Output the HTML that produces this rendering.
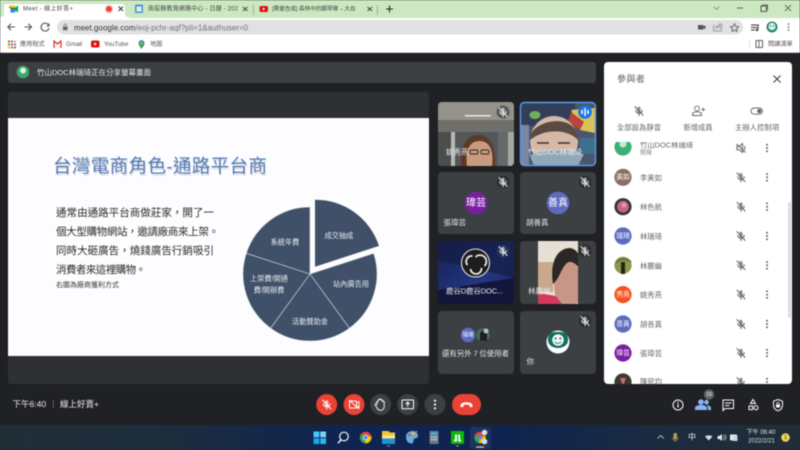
<!DOCTYPE html>
<html lang="zh-Hant"><head><meta charset="utf-8"><title>Meet - 線上好賣+</title>
<style>
html,body{margin:0;padding:0;width:800px;height:450px;overflow:hidden;background:#202124}
svg{display:block;filter:blur(.45px)}
text{font-family:"Liberation Sans","Noto Sans CJK TC",sans-serif;dominant-baseline:central}
.m{text-anchor:middle}
.tb{font-size:6px;fill:#444}
.bm{font-size:6.2px;fill:#555}
.tile{font-size:7.5px;fill:#e8eaed}
.av{font-size:10px;fill:#fff;text-anchor:middle}
.pn{font-size:7.3px;fill:#5f6368}
.pa{font-size:6.8px;fill:#fff;text-anchor:middle}
.pl{font-size:7.3px;fill:#5f6368;text-anchor:middle}
.b{font-size:10.5px;fill:#2a2a2a}
.pie{font-size:7.2px;fill:#e8ecf2;text-anchor:middle}
</style></head><body>
<svg width="800" height="450" viewBox="0 0 800 450" xmlns="http://www.w3.org/2000/svg">
<defs>
<g id="mic" fill="none" stroke-linecap="round">
<rect x="-1.6" y="-4.3" width="3.2" height="6" rx="1.6" stroke="none" fill="currentColor" opacity=".7"/>
<path d="M-3.2 -.6C-3.2 3.2 3.2 3.2 3.2 -.6M0 2.3V4.6M-4 -4.4L4 4.4" stroke="currentColor" stroke-width="1.05"/>
</g>
<g id="dots" fill="#5f6368"><circle cy="-3.3" r="1"/><circle r="1"/><circle cy="3.3" r="1"/></g>
<linearGradient id="tg" x1="0" x2="1" y1="0" y2="0"><stop offset="0" stop-color="#202e36"/><stop offset=".2" stop-color="#1d2d3c"/><stop offset=".42" stop-color="#0f2450"/><stop offset=".62" stop-color="#0f2450"/><stop offset=".85" stop-color="#1c2c3e"/><stop offset="1" stop-color="#202e38"/></linearGradient>
<linearGradient id="obs" x1="0" x2="1" y1="0" y2="1"><stop offset="0" stop-color="#14204f"/><stop offset=".6" stop-color="#233680"/><stop offset="1" stop-color="#1a2660"/></linearGradient>
<clipPath id="c1"><rect x="438" y="102" width="76" height="64" rx="4"/></clipPath>
<clipPath id="c2"><rect x="520" y="102" width="76" height="64" rx="4"/></clipPath>
<clipPath id="c5"><rect x="438" y="241" width="76" height="63" rx="4"/></clipPath>
<clipPath id="c6"><rect x="538" y="241" width="40" height="63"/></clipPath>
<clipPath id="list"><rect x="604" y="142" width="188" height="242"/></clipPath>
<clipPath id="t3"><rect x="270" y="2" width="88" height="15"/></clipPath>
</defs>

<!-- browser chrome -->
<rect width="800" height="18" fill="#cbe8c0"/>
<path d="M0 18V17C3 17 4 16 4 13V7C4 5 5 4 7 4H122C124 4 125 5 125 7V13C125 16 126 17 129 17V18Z" fill="#fff"/>
<g transform="translate(14,9)"><path d="M-3.5-3.5H1V0H-3.5Z" fill="#00832d"/><path d="M-3.5-3.5H1V-1H-3.5Z" fill="#fbbc04"/><path d="M-3.5 0H1V3.5H-3.5Z" fill="#2684fc"/><path d="M1-1.5L4-3.5V3.5L1 1.5Z" fill="#00ac47"/><path d="M-3.5-3.5V-1H-5.5Z" fill="#ea4335"/></g>
<text x="23" y="9.5" class="tb" textLength="50">Meet - 線上好賣+</text>
<circle cx="109" cy="9" r="3" fill="#ea4335"/><circle cx="109" cy="9" r="4.4" fill="#ea4335" opacity=".25"/>
<path d="M118.5 6.5L123 11M123 6.5L118.5 11" stroke="#333" stroke-width="1"/>
<rect x="135" y="4.5" width="8" height="8.5" rx="1" fill="#4a8fe8"/><rect x="136.5" y="6.5" width="5" height="5" fill="#e8f0d0"/>
<text x="148" y="9.5" class="tb" textLength="90">南投縣教育網路中心 - 日曆 - 202</text>
<path d="M243 7L247.5 11M247.5 7L243 11" stroke="#444" stroke-width="1"/>
<rect x="253" y="5" width=".8" height="10" fill="#8aa68a"/>
<rect x="259.5" y="6" width="8.5" height="6" rx="1.5" fill="#e01010"/><path d="M262.8 7.5L265.2 9L262.8 10.500Z" fill="#fff"/>
<text x="272" y="9.5" font-size="5.600" fill="#444" clip-path="url(#t3)">[票靈告成] 森林中的鋼琴聲 – 大自</text>
<path d="M367.500 7L372 11M372 7L367.500 11" stroke="#444" stroke-width="1"/>
<rect x="377" y="5" width=".8" height="10" fill="#8aa68a"/>
<path d="M389.500 5.500V12.500M386 9H393" stroke="#222" stroke-width="1.100"/>
<path d="M713.500 6.500L716.500 9.500L719.500 6.500" stroke="#888" fill="none" stroke-width=".8"/>
<path d="M737 8H743" stroke="#555" stroke-width=".9"/>
<rect x="761" y="6" width="5.500" height="5.500" fill="none" stroke="#444" stroke-width=".9"/><path d="M762.500 6V4.800H767.500V9.800H766.500" fill="none" stroke="#444" stroke-width=".7"/>
<path d="M785 5L791 11M791 5L785 11" stroke="#666" stroke-width=".9"/>

<rect y="18" width="800" height="17" fill="#fff"/>
<path d="M15 27H8M11 23.800L7.800 27L11 30.200" stroke="#555" stroke-width="1.100" fill="none"/>
<path d="M24.500 27H31.500M28.200 23.800L31.500 27L28.200 30.200" stroke="#555" stroke-width="1.100" fill="none"/>
<path d="M48.500 25A4 4 0 1 0 49 28M49 23.500V26H46.500" stroke="#555" stroke-width="1.100" fill="none"/>
<rect x="57" y="20" width="686" height="14.500" rx="7.200" fill="#e0e1e2"/>
<rect x="63" y="26.500" width="4.500" height="3.800" rx=".6" fill="#666"/><path d="M64 26.500V25.300A1.250 1.250 0 0 1 66.500 25.300V26.500" stroke="#666" stroke-width=".6" fill="none"/>
<text x="74" y="27.300" font-size="7.800" textLength="174" lengthAdjust="spacing"><tspan fill="#333">meet.google.com</tspan><tspan fill="#6d7073">/eoj-pchr-aqf?pli=1&amp;authuser=0</tspan></text>
<rect x="698" y="25" width="5.500" height="4.500" rx=".6" fill="#555"/><path d="M703.500 26.500L705.500 25.300V29.200L703.500 28Z" fill="#555"/>
<path d="M714.500 25.500H713.500V31H721.500V28M716 28.500C716 26 718 25 720 25V23.500L722.500 26L720 28V26.500C718.500 26.500 717 27 716 28.500Z" fill="none" stroke="#888" stroke-width=".7"/>
<path d="M734.500 23.800L735.800 26.400L738.600 26.800L736.500 28.700L737 31.400L734.500 30.100L732 31.400L732.500 28.700L730.400 26.800L733.200 26.400Z" fill="none" stroke="#555" stroke-width=".8"/>
<path d="M751 25H759M751 27.500H758M751 30H755" stroke="#333" stroke-width=".9"/><circle cx="757" cy="30" r="1.200" fill="#333"/><path d="M758.200 30V25.500" stroke="#333" stroke-width=".7"/>
<circle cx="772" cy="27" r="5.500" fill="#1f8a70"/><circle cx="772" cy="26.500" r="3.600" fill="#e8f3ef"/><circle cx="770.600" cy="26" r=".7" fill="#1f5a50"/><circle cx="773.400" cy="26" r=".7" fill="#1f5a50"/>
<g fill="#444"><circle cx="788.500" cy="24" r=".8"/><circle cx="788.500" cy="27" r=".8"/><circle cx="788.500" cy="30" r=".8"/></g>

<rect y="35" width="800" height="18" fill="#fff"/>
<g fill="#ea4335"><rect x="8" y="40.500" width="2" height="2"/><rect x="14" y="40.500" width="2" height="2" fill="#fbbc04"/><rect x="11" y="40.500" width="2" height="2" fill="#4285f4"/><rect x="8" y="43.500" width="2" height="2" fill="#34a853"/><rect x="11" y="43.500" width="2" height="2"/><rect x="14" y="43.500" width="2" height="2" fill="#4285f4"/><rect x="8" y="46.500" width="2" height="2" fill="#fbbc04"/><rect x="11" y="46.500" width="2" height="2" fill="#34a853"/><rect x="14" y="46.500" width="2" height="2"/></g>
<text x="20" y="44.500" class="bm">應用程式</text>
<path d="M54 40.500H61V48H54Z" fill="#f4f4f4"/><path d="M54 48V41L57.500 44L61 41V48" fill="none" stroke="#d9342b" stroke-width="1.200"/>
<text x="66" y="44.500" class="bm">Gmail</text>
<rect x="91" y="40.500" width="8.500" height="7" rx="1.800" fill="#e01010"/><path d="M94.200 42.300L96.800 44L94.200 45.700Z" fill="#fff"/>
<text x="104" y="44.500" class="bm">YouTube</text>
<path d="M141.500 49C139.500 46 138.500 44.800 138.500 43.200A3 3 0 0 1 144.500 43.200C144.500 44.800 143.500 46 141.500 49Z" fill="#34a853"/><path d="M139 41.500A3 3 0 0 1 144 41.500L141.500 44Z" fill="#4285f4"/><circle cx="141.500" cy="43.200" r="1" fill="#fbbc04"/>
<text x="150" y="44.500" class="bm">地圖</text>
<rect x="749" y="40" width=".7" height="8" fill="#ccc"/>
<rect x="756" y="40.500" width="6.500" height="7" fill="none" stroke="#555" stroke-width=".9"/><path d="M759 41V47" stroke="#555" stroke-width=".8"/>
<text x="768" y="44.500" class="bm">閱讀清單</text>
<rect y="52.500" width="800" height=".8" fill="#9aa0a6"/>

<!-- meet area -->
<rect y="53" width="800" height="372" fill="#202124"/>
<rect x="8" y="62" width="588" height="21" rx="3" fill="#3c4043"/>
<circle cx="23" cy="72" r="6.300" fill="#3ba56c"/><circle cx="23" cy="70.500" r="3" fill="#dff1e6"/>
<text x="37" y="72.500" font-size="7.500" fill="#e8eaed" textLength="114">竹山DOC林瑞琦正在分享螢幕畫面</text>

<rect x="8" y="92" width="421" height="292" rx="3" fill="#2f3033"/>
<rect x="8" y="118" width="421" height="238" fill="#fdfcff"/>
<text x="53" y="166.500" font-size="18.600" fill="#cfd3da" textLength="214" transform="translate(.8,1.600)" opacity=".7">台灣電商角色-通路平台商</text>
<text x="53" y="166" font-size="18.600" fill="#5277b0" textLength="214">台灣電商角色-通路平台商</text>
<text x="56" y="213" class="b" textLength="158">通常由通路平台商做莊家，開了一</text>
<text x="56" y="232" class="b" textLength="163">個大型購物網站，邀請廠商來上架。</text>
<text x="56" y="251" class="b" textLength="158">同時大砸廣告，燒錢廣告行銷吸引</text>
<text x="56" y="270" class="b" textLength="90">消費者來這裡購物。</text>
<text x="56" y="285.700" font-size="7" fill="#333" textLength="63">右圖為廠商獲利方式</text>

<g fill="#3f5068" stroke="#dfe3ea" stroke-width=".6">
<path d="M310 274L373.700 253.300A67 67 0 0 1 349.400 328.200Z"/>
<path d="M310 274L349.400 328.200A67 67 0 0 1 270.600 328.200Z"/>
<path d="M310 274L270.600 328.200A67 67 0 0 1 246.300 253.300Z"/>
<path d="M310 274L246.300 253.300A67 67 0 0 1 310 207Z"/>
</g>
<path d="M315 266.700L379 245.900A67 67 0 0 0 315 199.700Z" fill="#3f5068"/>
<text x="339" y="235.700" class="pie">成交抽成</text>
<text x="285" y="242" class="pie">系統年費</text>
<text x="351" y="284" class="pie">站內廣告用</text>
<text x="310" y="321.700" class="pie">活動贊助金</text>
<text x="269" y="278.700" class="pie">上架費/開通</text>
<text x="269" y="290" class="pie">費/開辦費</text>

<!-- tile 1 -->
<g clip-path="url(#c1)">
<rect x="438" y="102" width="76" height="64" fill="#6b6a66"/>
<rect x="438" y="102" width="76" height="18" fill="#94928a"/>
<rect x="465" y="115" width="26" height="1.500" fill="#ece9df"/>
<rect x="438" y="120" width="76" height="12" fill="#6f706c"/>
<rect x="438" y="132" width="13" height="34" fill="#4c4e4e"/>
<rect x="451" y="132" width="4" height="34" fill="#b9b9b3"/>
<rect x="455" y="132" width="43" height="34" fill="#54575a"/>
<rect x="498" y="132" width="10" height="34" fill="#66696a"/>
<rect x="508" y="132" width="6" height="34" fill="#a8a8a2"/>
<path d="M461 166C460 148 465 135 478 135C491 135 496 148 495 166Z" fill="#5d3a26"/>
<path d="M467 166C465 151 469 141 479.500 141C490 141 494 151 492 166Z" fill="#c99a7e"/>
<rect x="470" y="150" width="8" height="4" rx="1.500" fill="none" stroke="#2b2724" stroke-width=".9"/><rect x="481" y="150" width="8" height="4" rx="1.500" fill="none" stroke="#2b2724" stroke-width=".9"/>
</g>
<text x="446" y="152" class="tile">姚秀燕</text>
<circle cx="503" cy="112" r="6.500" fill="#3c4043" opacity=".7"/><use href="#mic" x="503" y="112" color="#e8eaed"/>

<!-- tile 2 -->
<g clip-path="url(#c2)">
<rect x="520" y="102" width="76" height="64" fill="#4a5670"/>
<rect x="520" y="102" width="55" height="24" fill="#333f58"/>
<path d="M571 110L595 108V133L580 130Z" fill="#d9c25c"/>
<path d="M571 112L584 122L580 130L568 122Z" fill="#b8443a"/>
<ellipse cx="535" cy="115" rx="5.500" ry="4" fill="#6fae5e"/>
<rect x="520" y="125" width="9" height="41" fill="#7a86a8"/>
<ellipse cx="554" cy="141" rx="24" ry="25" fill="#d6b8a6"/>
<path d="M530 140C528 120 578 110 578 140C568 129 545 128 530 140Z" fill="#5a4a42"/>
<path d="M537 143H549M558 143H570" stroke="#3a3330" stroke-width="1.400"/>
<path d="M530 156C540 149 570 148 584 154L578 166H534Z" fill="#8fa9b8"/>
<rect x="580" y="138" width="16" height="16" fill="#3e6f8f"/>
</g>
<rect x="520.500" y="102.500" width="75" height="63" rx="4" fill="none" stroke="#5b9be8" stroke-width="1.400"/>
<text x="528" y="152" class="tile" textLength="54">竹山DOC林瑞琦</text>
<circle cx="585" cy="112" r="6.800" fill="#1a73e8"/><path d="M582 110.500V113.500M585 108.500V115.500M588 110.500V113.500" stroke="#fff" stroke-width="1.500" stroke-linecap="round"/>

<!-- tile 3,4 -->
<rect x="438" y="172" width="76" height="62" rx="4" fill="#3c4043"/>
<circle cx="503" cy="182" r="6.500" fill="#2e3033"/><use href="#mic" x="503" y="182" color="#e8eaed"/>
<circle cx="476" cy="203" r="11.300" fill="#7b1fa2"/><text x="476" y="203.500" class="av">瑋芸</text>
<text x="443.500" y="222.500" class="tile">張瑋芸</text>
<rect x="520" y="172" width="76" height="62" rx="4" fill="#3c4043"/>
<circle cx="585" cy="182" r="6.500" fill="#2e3033"/><use href="#mic" x="585" y="182" color="#e8eaed"/>
<circle cx="558" cy="203" r="11.300" fill="#5c6bc0"/><text x="558" y="203.500" class="av">善真</text>
<text x="526" y="222.500" class="tile">胡善真</text>

<!-- tile 5 -->
<g clip-path="url(#c5)">
<rect x="438" y="241" width="76" height="63" fill="url(#obs)"/>
<path d="M438 241H514V278L438 260Z" fill="#141d45" opacity=".7"/>
<path d="M438 290L514 278V304H438Z" fill="#12163a"/>
</g>
<circle cx="475.500" cy="263" r="14" fill="#1e1c1e" stroke="#e8e8e8" stroke-width="1.100"/>
<g fill="none" stroke="#e8e8e8" stroke-width="1.800"><path d="M475.500 257A5.500 5.500 0 0 1 484.500 266"/><path d="M481.500 268A5.500 5.500 0 0 1 470.500 269"/><path d="M467.500 265A5.500 5.500 0 0 1 472.500 256"/></g>
<circle cx="503" cy="251" r="6.500" fill="#2b3358" opacity=".8"/><use href="#mic" x="503" y="251" color="#e8eaed"/>
<text x="446" y="291" class="tile" textLength="57">鹿谷D鹿谷DOC...</text>

<!-- tile 6 -->
<rect x="520" y="241" width="76" height="63" rx="4" fill="#3c4043"/>
<g clip-path="url(#c6)">
<rect x="538" y="241" width="40" height="63" fill="#e6dfd5"/>
<rect x="538" y="262" width="15" height="30" fill="#c9a98c"/>
<ellipse cx="568" cy="285" rx="14" ry="24" fill="#c89684"/>
<path d="M553 284C549 258 560 248 570 248C578 249 582 258 582 272C578 266 572 259 567 263C561 268 560 278 553 284Z" fill="#2c2626"/>
<path d="M538 304V293L556 296L562 304Z" fill="#d23a5e"/>
</g>
<text x="528" y="291" class="tile">林麗幽</text>
<circle cx="585" cy="251" r="6.500" fill="#2e3033"/><use href="#mic" x="585" y="251" color="#e8eaed"/>

<!-- tile 7 -->
<rect x="438" y="311" width="76" height="63" rx="4" fill="#3c4043"/>
<circle cx="468" cy="335" r="7.300" fill="#5c6bc0"/><text x="468" y="335.300" font-size="5.500" fill="#fff" text-anchor="middle">瑞琦</text>
<circle cx="483" cy="335" r="7.300" fill="#4c6b5c" stroke="#3c4043"/><path d="M480 341V333L483 330L487 334V341Z" fill="#1e1e1e"/><circle cx="486" cy="331" r="2.500" fill="#a9c3c4"/>
<text x="475.500" y="353.500" class="tile m" textLength="67">還有另外 7 位使用者</text>

<!-- tile 8 -->
<rect x="520" y="311" width="76" height="63" rx="4" fill="#3c4043"/>
<circle cx="585" cy="321" r="6.500" fill="#2e3033"/><use href="#mic" x="585" y="321" color="#e8eaed"/>
<circle cx="558" cy="342" r="11.500" fill="#fff"/>
<path d="M548 340C548 332 552 332 558 332C564 332 568 332 568 340C568 346 562 348 558 348C554 348 548 346 548 340Z" fill="#126e62"/>
<circle cx="558" cy="340" r="5.800" fill="#f3f6f4"/><circle cx="555.700" cy="338.500" r="1" fill="#126e62"/><circle cx="560.300" cy="338.500" r="1" fill="#126e62"/><path d="M555 341.500C556 344 560 344 561 341.500" stroke="#126e62" fill="none" stroke-width=".8"/>
<text x="526.500" y="361.700" class="tile">你</text>

<!-- participants panel -->
<rect x="604" y="62" width="188" height="322" rx="4" fill="#fff"/>
<text x="617" y="79" font-size="9.300" fill="#5f6368">參與者</text>
<path d="M773.500 75.500L780.500 82.500M780.500 75.500L773.500 82.500" stroke="#3c4043" stroke-width="1.100"/>
<use href="#mic" x="639" y="111" color="#5f6368"/>
<g fill="none" stroke="#5f6368" stroke-width=".9"><circle cx="697" cy="108.500" r="2.400"/><path d="M692.500 115.500V114C692.500 112.500 695 111.800 697 111.800C699 111.800 701.500 112.500 701.500 114V115.500ZM701.500 109.500H705M703.200 107.700V111.300"/><rect x="751" y="108" width="11.500" height="6.200" rx="3.100"/></g><circle cx="759.300" cy="111.100" r="2.100" fill="#5f6368"/>
<text x="639" y="127.300" class="pl" textLength="44">全部設為靜音</text>
<text x="698" y="127.300" class="pl" textLength="29">新增成員</text>
<text x="757" y="127.300" class="pl" textLength="44">主辦人控制項</text>

<g clip-path="url(#list)">
<circle cx="623" cy="147" r="8.600" fill="#3fb074"/><circle cx="623" cy="144" r="3.500" fill="#c5e8d4"/>
<text x="640" y="145" class="pn" textLength="53">竹山DOC林瑞琦</text><text x="640" y="153.500" font-size="6" fill="#80868b">簡報</text>
<g fill="none" stroke="#5f6368" stroke-width="1"><path d="M737 146.300V149.700H739.300L742.500 152.400V143.600L739.300 146.300ZM744 146C745.300 147 745.300 149 744 150M736.500 144L745.500 152.500"/></g>
<g color="#5f6368"><use href="#mic" x="741" y="177.300"/><use href="#mic" x="741" y="206.700"/><use href="#mic" x="741" y="236"/><use href="#mic" x="741" y="265.300"/><use href="#mic" x="741" y="294.600"/><use href="#mic" x="741" y="324"/><use href="#mic" x="741" y="353"/><use href="#mic" x="741" y="382"/></g>
<use href="#dots" x="767" y="148"/><use href="#dots" x="767" y="177.300"/><use href="#dots" x="767" y="206.700"/><use href="#dots" x="767" y="236"/><use href="#dots" x="767" y="265.300"/><use href="#dots" x="767" y="294.600"/><use href="#dots" x="767" y="324"/><use href="#dots" x="767" y="353"/><use href="#dots" x="767" y="382"/>

<circle cx="623" cy="177.300" r="8.600" fill="#8d6e63"/><text x="623" y="177.600" class="pa">美如</text>
<text x="640" y="178" class="pn">李美如</text>
<circle cx="623" cy="206.700" r="8.600" fill="#2d3d2a"/><circle cx="623" cy="206.700" r="5.800" fill="#d0628a"/><circle cx="624" cy="205" r="2.500" fill="#e88fb0"/>
<text x="640" y="207" class="pn">林色航</text>
<circle cx="623" cy="236" r="8.600" fill="#5c6bc0"/><text x="623" y="236.300" class="pa">瑞琦</text>
<text x="640" y="236.500" class="pn">林瑞琦</text>
<circle cx="623" cy="265.300" r="8.600" fill="#8a9a4a"/><path d="M616 263C620 258 626 258 631 262" stroke="#5f7a35" stroke-width="2" fill="none"/><rect x="621" y="262" width="4" height="12" fill="#252520"/>
<text x="640" y="265.800" class="pn">林麗幽</text>
<circle cx="623" cy="294.600" r="8.600" fill="#f4511e"/><text x="623" y="294.900" class="pa">秀燕</text>
<text x="640" y="295" class="pn">姚秀燕</text>
<circle cx="623" cy="324" r="8.600" fill="#5c6bc0"/><text x="623" y="324.300" class="pa">善真</text>
<text x="640" y="324.400" class="pn">胡善真</text>
<circle cx="623" cy="353" r="8.600" fill="#7b1fa2"/><text x="623" y="353.300" class="pa">瑋芸</text>
<text x="640" y="353.400" class="pn">張瑋芸</text>
<circle cx="623" cy="382" r="8.600" fill="#3d3a2c"/><path d="M620 378L626 378L623 386Z" fill="#c46a8a"/>
<text x="640" y="381.500" class="pn">陳宛均</text>
</g>
<rect x="788" y="202" width="3" height="116" rx="1.500" fill="#dadce0"/>

<!-- bottom bar -->
<text x="12.500" y="404" font-size="8.500" fill="#e8eaed">下午6:40</text>
<rect x="53" y="400" width=".6" height="8" fill="#80868b"/>
<text x="60" y="404" font-size="8.500" fill="#e8eaed">線上好賣+</text>

<circle cx="326.700" cy="404.500" r="10.500" fill="#ea4335"/><use href="#mic" x="326.700" y="404.500" color="#fff"/>
<circle cx="354" cy="404.500" r="10.500" fill="#ea4335"/>
<g fill="none" stroke="#fff" stroke-width=".95"><rect x="349.500" y="401" width="7" height="7" rx=".8"/><path d="M356.500 403L359 401.500V407.500L356.500 406M349 400L359 409"/></g>
<circle cx="380.700" cy="404.500" r="10.500" fill="#3c4043"/>
<path d="M376.500 404V402.500C376.500 401.300 378 401.300 378 402.500V400.300C378 399.200 379.500 399.200 379.500 400.300V399.800C379.500 398.700 381 398.700 381 399.800V400.500C381 399.500 382.500 399.500 382.500 400.500V402C382.500 401 384.200 401 384.200 402V406.500C384.200 409 382.500 410.300 380.500 410.300C378.500 410.300 377.500 409 376.800 407.500L375.300 405C374.800 404 376 403.300 376.800 404.200L377.500 405" fill="none" stroke="#fff" stroke-width=".9"/>
<circle cx="407.700" cy="404.500" r="10.500" fill="#3c4043"/>
<rect x="402" y="400" width="11.500" height="8.800" rx=".8" fill="none" stroke="#fff" stroke-width="1"/><path d="M407.700 407V402.200M405.600 404.200L407.700 402.100L409.800 404.200" fill="none" stroke="#fff" stroke-width="1"/>
<circle cx="435" cy="404.500" r="10.500" fill="#3c4043"/>
<g fill="#fff"><circle cx="435" cy="400.700" r="1.100"/><circle cx="435" cy="404.500" r="1.100"/><circle cx="435" cy="408.300" r="1.100"/></g>
<rect x="452" y="394" width="29" height="21" rx="10.500" fill="#ea4335"/>
<path d="M460.500 405.500C460.500 401.200 472.500 401.200 472.500 405.500V407H469.500V405.200C468 404.500 465 404.500 463.500 405.200V407H460.500Z" fill="#fff"/>

<circle cx="678" cy="405" r="5" fill="none" stroke="#fff" stroke-width="1"/><rect x="677.400" y="404" width="1.200" height="3.500" fill="#fff"/><circle cx="678" cy="402.500" r=".7" fill="#fff"/>
<g fill="#8ab4f8"><circle cx="701" cy="402" r="2.800"/><path d="M695 410V408C695 405.800 698.500 405 701 405C703.500 405 707 405.800 707 408V410Z"/><circle cx="706.500" cy="402.200" r="2.300"/><path d="M708 410V408C708 406.800 707.500 405.900 706.500 405.200C708.500 405.200 711 406 711 408V410Z"/></g>
<circle cx="709" cy="394.500" r="5.200" fill="#5f6368"/><text x="709" y="394.800" font-size="5.500" fill="#fff" text-anchor="middle">15</text>
<path d="M723 400H733.500V408.500H725L723 410.500Z" fill="none" stroke="#fff" stroke-width="1"/><path d="M725 403H731.500M725 405.500H729.500" stroke="#fff" stroke-width=".9"/>
<g fill="none" stroke="#fff" stroke-width="1"><path d="M753 399.500L755.500 403.500H750.500Z"/><rect x="749" y="406" width="3.600" height="3.600"/><circle cx="756" cy="407.800" r="2"/></g>
<path d="M778 399.500L782.500 401.200V405C782.500 408 780.500 410 778 410.800C775.500 410 773.500 408 773.500 405V401.200Z" fill="none" stroke="#fff" stroke-width="1"/><rect x="776" y="404.500" width="4" height="3" fill="#fff"/><path d="M776.800 404.500V403.500A1.200 1.200 0 0 1 779.200 403.500V404.500" fill="none" stroke="#fff" stroke-width=".7"/>

<!-- taskbar -->
<rect y="425" width="800" height="25" fill="url(#tg)"/>
<g fill="#4cc2ff"><rect x="313.500" y="431.500" width="5.800" height="5.800"/><rect x="320.200" y="431.500" width="5.800" height="5.800" fill="#6fd3ff"/><rect x="313.500" y="438.200" width="5.800" height="5.800" fill="#1ea5e8"/><rect x="320.200" y="438.200" width="5.800" height="5.800" fill="#2fb4f0"/></g>
<circle cx="344" cy="436.500" r="4.300" fill="none" stroke="#eef4f8" stroke-width="1.200"/><path d="M340.800 440L338 443.300" stroke="#eef4f8" stroke-width="1.500"/>
<circle cx="365.700" cy="437.500" r="5.800" fill="#e2483a"/><path d="M365.700 437.500L371.300 436A5.800 5.800 0 0 1 365 443.300Z" fill="#fbbc04"/><path d="M365.700 437.500L365 443.300A5.800 5.800 0 0 1 360.500 435Z" fill="#34a853"/><circle cx="365.700" cy="437.500" r="2.400" fill="#4c8bf5" stroke="#fff" stroke-width=".7"/>
<path d="M382 431H388.500L390 432.500H395V444H382Z" fill="#f5c53d"/><rect x="382" y="435.500" width="13" height="3" fill="#fde48a"/><rect x="382" y="438.500" width="13" height="5.500" fill="#1b93d4"/>
<rect x="387" y="445.500" width="3" height=".9" fill="#9aa5b1"/>
<path d="M406 437C406 433 409 431 412.500 431C416 431 418 433.500 418 436C418 438.500 415 438 414 439C413 440 414 443.500 411.500 443.500C408.500 443.500 406 441 406 437Z" fill="#5ab0e8"/><circle cx="409.500" cy="435" r="1.300" fill="#e84040"/><circle cx="413" cy="433.500" r="1.200" fill="#f5c53d"/><path d="M417 431L411 439" stroke="#d48b50" stroke-width="1.300"/>
<rect x="429.500" y="431" width="9" height="13" rx=".8" fill="#6b7787"/><rect x="431" y="432.500" width="6" height="2.500" fill="#3db0e8"/><g fill="#dfe4e8"><rect x="431" y="436.500" width="1.600" height="1.300"/><rect x="433.300" y="436.500" width="1.600" height="1.300"/><rect x="435.500" y="436.500" width="1.600" height="1.300"/><rect x="431" y="439" width="1.600" height="1.300"/><rect x="433.300" y="439" width="1.600" height="1.300"/><rect x="435.500" y="439" width="1.600" height="1.300"/></g>
<rect x="451" y="431" width="13" height="13" rx="1.500" fill="#0bb80b"/><path d="M453.500 441.500C454 440 455 440 455 438V434.500H457V441.500ZM461.500 441.500C461 440 460 440 460 438V434.500H458.200V441.500Z" fill="#fff"/>
<rect x="456" y="445.500" width="3" height=".9" fill="#9aa5b1"/>
<rect x="470" y="427" width="21" height="22" rx="2" fill="#fff" opacity=".07"/>
<circle cx="480" cy="437.500" r="5.600" fill="#e2483a"/><path d="M480 437.500L485.500 436A5.600 5.600 0 0 1 479 443Z" fill="#fbbc04"/><path d="M480 437.500L479 443A5.600 5.600 0 0 1 475 435Z" fill="#34a853"/><circle cx="480" cy="437.500" r="2.200" fill="#4c8bf5"/>
<circle cx="484.500" cy="432.500" r="2.800" fill="#d8dee0"/><circle cx="484.500" cy="441.500" r="2.800" fill="#d8dee0"/>
<rect x="476" y="446.500" width="8" height="1.100" rx=".5" fill="#f0dca0"/>

<path d="M657.500 438.500L660.700 435.500L664 438.500" fill="none" stroke="#dfe3e6" stroke-width=".8"/>
<rect x="673.500" y="433" width="3.500" height="6.500" rx="1.700" fill="#b89a54"/><path d="M672.500 437.500C672.500 441.500 678 441.500 678 437.500M675.200 440.500V442" stroke="#b89a54" fill="none" stroke-width=".7"/>
<text x="692" y="437" font-size="8" fill="#e6e9ec" text-anchor="middle">中</text>
<path d="M705 436.500C707 435 710.500 435 712.500 436.500L708.700 440.500Z" fill="#d8dce0"/>
<path d="M717.500 436H719.500L722 434V441L719.500 439H717.500Z" fill="#e6e9ec"/><path d="M723 435.500C724.500 436.500 724.500 438.500 723 439.500M724.500 434.500C726.500 436 726.500 439 724.500 440.500" fill="none" stroke="#e6e9ec" stroke-width=".6"/>
<rect x="730" y="434.500" width="7" height="6" rx=".5" fill="#e6e9ec"/><rect x="733" y="436" width="4.500" height="5" fill="#d0d4d8"/>
<text x="761" y="433" font-size="6" fill="#dfe3e6" text-anchor="middle">下午 06:40</text>
<text x="761.500" y="441.700" font-size="6" fill="#dfe3e6" text-anchor="middle">2022/2/21</text>
<circle cx="785.500" cy="437.500" r="4.300" fill="#f5d35a"/><text x="785.500" y="437.800" font-size="5.500" fill="#222" text-anchor="middle">1</text>
</svg>
</body></html>
